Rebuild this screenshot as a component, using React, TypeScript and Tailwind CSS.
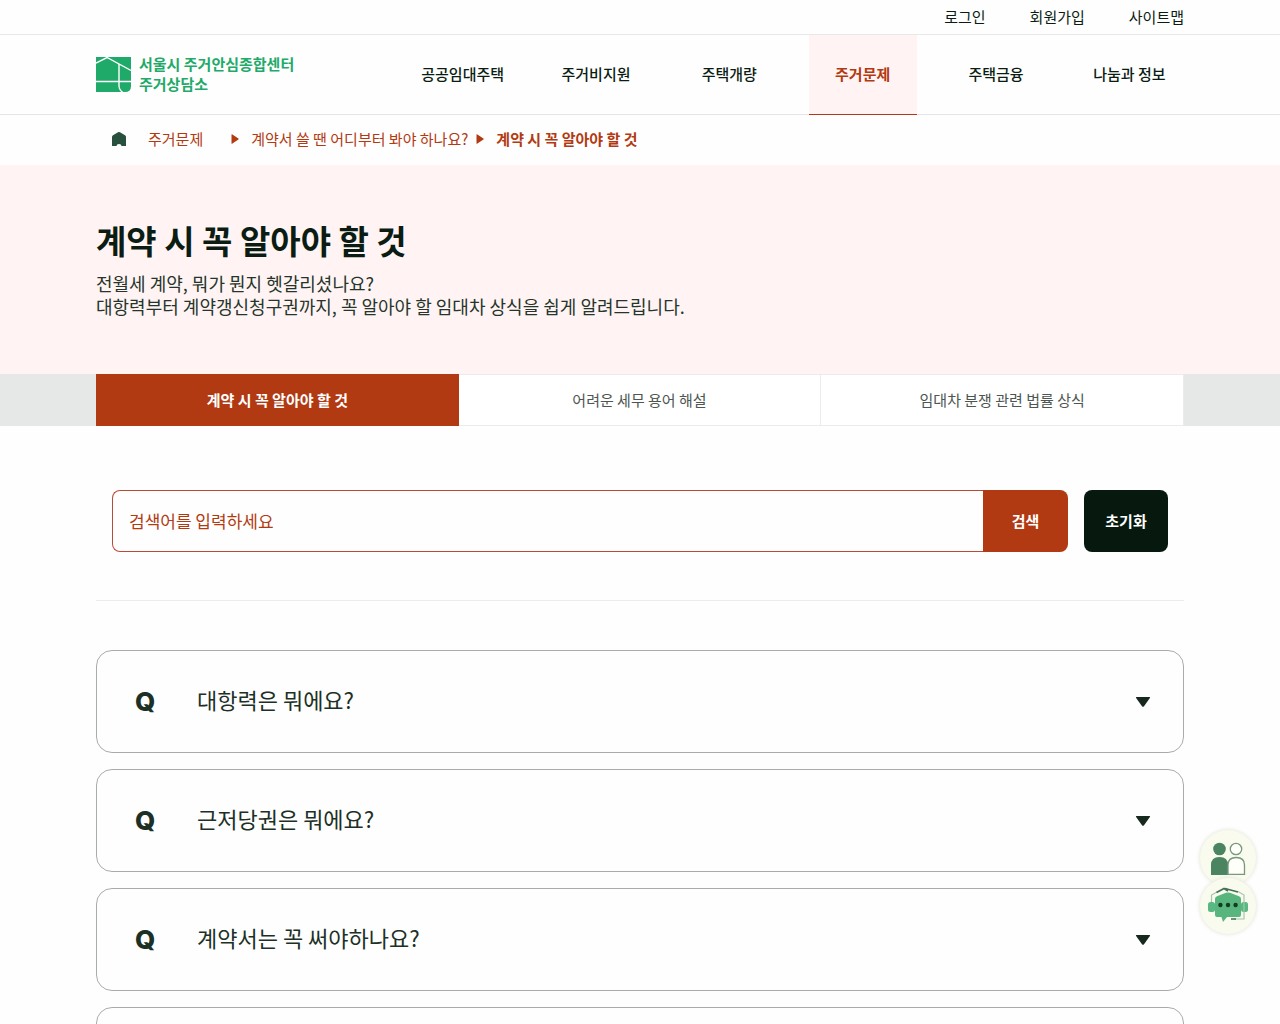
import { useState } from "react";

const utilLinks = ["로그인", "회원가입", "사이트맵"];
const menus = ["공공임대주택", "주거비지원", "주택개량", "주거문제", "주택금융", "나눔과 정보"];
const tabs = ["계약 시 꼭 알아야 할 것", "어려운 세무 용어 해설", "임대차 분쟁 관련 법률 상식"];
const questions = ["대항력은 뭐에요?", "근저당권은 뭐에요?", "계약서는 꼭 써야하나요?", "확정일자는 뭐에요?"];

const Logo = () => (
  <svg width="35" height="35" viewBox="0 0 35 35" aria-hidden="true">
    <path d="M0 0h35v29q0 6-6 6H0z" fill="#1faa69" />
    <g fill="none" stroke="#fff" strokeWidth="1.4">
      <path d="M0 6 11 .5 35 13.500" />
      <path d="M0 24.500H35" />
      <path d="M23 7V29c0 3 1.500 5 4 6.500" />
    </g>
  </svg>
);

const HomeIcon = () => (
  <svg width="14" height="14" viewBox="0 0 14 14" aria-hidden="true">
    <path d="M0 5Q0 3.800 1 3.200L6 .3Q7 -.2 8 .3L13 3.200Q14 3.800 14 5V14H9.500Q9.500 12 7 12T4.500 14H0z" fill="#294f3e" />
  </svg>
);

const Arrow = () => (
  <svg width="8" height="10" viewBox="0 0 8 10" aria-hidden="true">
    <path d="M.5 .8Q.5 -.2 1.400 .4L7.400 4.400Q8 5 7.400 5.600L1.400 9.600Q.5 10.200 .5 9.200z" fill="#b23a12" />
  </svg>
);

const PeopleIcon = () => (
  <svg width="36" height="36" viewBox="0 0 36 36" aria-hidden="true">
    <circle cx="9.500" cy="9" r="6.300" fill="#4b8460" />
    <path d="M1 35V25q0-8 8.500-8t8.500 8v10z" fill="#4b8460" />
    <g fill="#fffffa" stroke="#77977f" strokeWidth="1.300">
      <circle cx="26" cy="9" r="5.700" />
      <path d="M18 34.400V25q0-7.500 8.200-7.500t8.300 7.500v9.400z" />
    </g>
  </svg>
);

const ChatIcon = () => (
  <svg width="42" height="38" viewBox="0 0 42 38" aria-hidden="true">
    <rect x="1" y="15" width="7" height="10" rx="2.500" fill="#58b983" />
    <rect x="34" y="15" width="7" height="10" rx="2.500" fill="#58b983" />
    <path d="M8 12Q8 10 10 9.300L19 5.800Q21 5 23 5.800L32 9.300Q34 10 34 12V28Q34 30 32 30H20L16 35 14.500 30H10Q8 30 8 28z" fill="#58b57d" />
    <path d="M4.500 15V8L10 5M31 4.500 37 8V32H27" fill="none" stroke="#a9c5ad" strokeWidth="1.200" />
    <path d="M9.500 5.500 17 1.500 21 4M18 1.500 31 5M24 32h5" fill="none" stroke="#456f56" strokeWidth="1.700" />
    <g fill="#123d24">
      <circle cx="13.400" cy="18" r="2.200" />
      <circle cx="21" cy="18" r="2.200" />
      <circle cx="28.600" cy="18" r="2.200" />
    </g>
  </svg>
);

const Header = () => (
  <header>
    <div className="flex h-[35px] items-center justify-end gap-11 border-b border-[#e8e8e8] px-24">
      {utilLinks.map((link) => (
        <a key={link} href="#" className="text-[15px]">{link}</a>
      ))}
    </div>
    <div className="flex h-20 justify-between border-b border-[#e5e5e5] pr-[84px] pl-24">
      <a href="#" className="flex items-center gap-2 text-[15px] leading-5 font-bold whitespace-nowrap text-[#1faa69]">
        <Logo />
        <span className="pb-0.5">서울시 주거안심종합센터<br />주거상담소</span>
      </a>
      <nav className="-mb-px grid w-[800px] grid-cols-6">
        {menus.map((menu) => (
          <div key={menu} className="flex justify-center">
            <a
              href="#"
              className={
                menu === "주거문제"
                  ? "flex w-27 items-center justify-center border-b border-[#b23a12] bg-[#fff4f3] text-[15px] font-bold text-[#b23a12]"
                  : "flex items-center justify-center pb-0.5 text-[15px] font-medium whitespace-nowrap"
              }
            >
              {menu}
            </a>
          </div>
        ))}
      </nav>
    </div>
  </header>
);

const Breadcrumb = () => (
  <nav aria-label="breadcrumb" className="flex h-[50px] items-center px-28 pb-0.5 text-[15px] text-[#b23a12]">
    <a href="#" aria-label="홈" className="mr-[22px]"><HomeIcon /></a>
    <a href="#" className="mr-7">주거문제</a>
    <Arrow />
    <a href="#" className="mr-2 ml-3">계약서 쓸 땐 어디부터 봐야 하나요?</a>
    <Arrow />
    <strong className="ml-3">계약 시 꼭 알아야 할 것</strong>
  </nav>
);

const SearchForm = () => {
  const [keyword, setKeyword] = useState("");

  return (
    <form
      className="flex gap-4 border-b border-[#ececec] px-4 pt-16 pb-12"
      onSubmit={(e) => e.preventDefault()}
    >
      <div className="flex h-[62px] flex-1">
        <input
          type="text"
          aria-label="검색어"
          value={keyword}
          onChange={(e) => setKeyword(e.target.value)}
          placeholder="검색어를 입력하세요"
          className="min-w-0 flex-1 rounded-l-lg border border-r-0 border-[#b94a35] px-4 text-[17px] text-[#b23a12] outline-none placeholder:text-[#b23a12]"
        />
        <button type="submit" className="w-[85px] rounded-r-lg bg-[#b23a12] text-[15px] font-bold text-white">검색</button>
      </div>
      <button
        type="button"
        onClick={() => setKeyword("")}
        className="w-21 rounded-lg bg-[#07190e] text-[15px] font-bold text-white"
      >
        초기화
      </button>
    </form>
  );
};

const App = () => {
  return (
    <div className="bg-[#fefefe] font-['Noto_Sans_CJK_KR',sans-serif] text-[#0b1d13]">
      <Header />
      <Breadcrumb />

      <section className="bg-[#fff4f3] px-24 pt-[51px] pb-14">
        <h1 className="text-[33px] leading-12 font-bold">계약 시 꼭 알아야 할 것</h1>
        <p className="mt-2 text-[18px] leading-[23px] text-[#26352c]">
          전월세 계약, 뭐가 뭔지 헷갈리셨나요?<br />
          대항력부터 계약갱신청구권까지, 꼭 알아야 할 임대차 상식을 쉽게 알려드립니다.
        </p>
      </section>

      <div className="bg-[#e5e8e7] px-24">
        <nav className="grid h-[52px] grid-cols-3 text-[15px]">
          {tabs.map((tab, i) => (
            <a
              key={tab}
              href="#"
              className={
                i === 0
                  ? "flex items-center justify-center bg-[#b23a12] font-bold text-white"
                  : "flex items-center justify-center border-y border-r border-[#ebebeb] bg-white text-[#4d5651]"
              }
            >
              {tab}
            </a>
          ))}
        </nav>
      </div>

      <main className="px-24 pb-16">
        <SearchForm />
        <ul className="mt-[49px] flex flex-col gap-4">
          {questions.map((question) => (
            <li key={question}>
              <button type="button" className="flex h-[103px] w-full items-center rounded-2xl border border-[#a9acaa] pr-8 pl-[38px] text-left text-[22px] text-[#1d3026]">
                <span className="w-[62px] font-['Inter',sans-serif] text-[26px] font-extrabold">Q</span>
                <span className="flex-1 pb-1">{question}</span>
                <svg width="16" height="12" viewBox="0 0 16 12" aria-hidden="true">
                  <path d="M1.500 1h13q1 0 .4 1L9 10.200q-1 1.300-2 0L1.100 2Q.5 1 1.500 1z" fill="#17291f" />
                </svg>
              </button>
            </li>
          ))}
        </ul>
      </main>

      <div className="fixed right-6 bottom-[90px] flex flex-col">
        <button type="button" aria-label="상담 신청" className="flex size-14 items-center justify-center rounded-full bg-[#f8fbee] shadow-[0_0_4px_#dde1d3]">
          <PeopleIcon />
        </button>
        <button type="button" aria-label="채팅 상담" className="-mt-2 flex size-14 items-center justify-center rounded-full bg-[#f8fbee] shadow-[0_0_4px_#dde1d3]">
          <ChatIcon />
        </button>
      </div>
    </div>
  );
};

export default App;
